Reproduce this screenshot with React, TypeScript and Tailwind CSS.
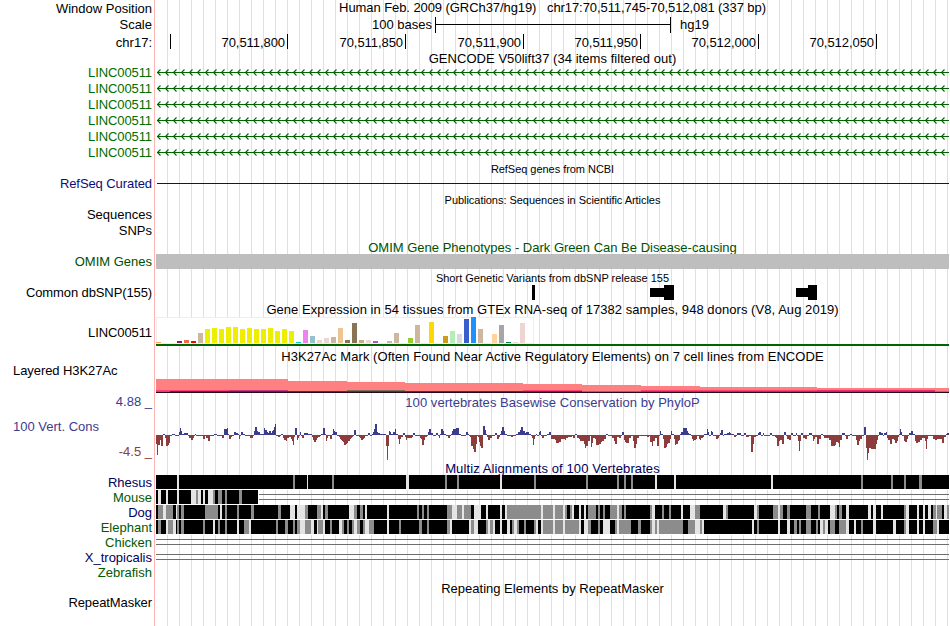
import type { ReactNode } from "react";
import clsx from "clsx";

const TRACK_WIDTH = 793;

const rulerTicks = [
  { label: "", width: 15 },
  { label: "70,511,800", width: 117 },
  { label: "70,511,850", width: 118 },
  { label: "70,511,900", width: 118 },
  { label: "70,511,950", width: 117 },
  { label: "70,512,000", width: 118 },
  { label: "70,512,050", width: 118 },
];

// [colour, height] for each GTEx tissue
const gtexBars: [string, number][] = [
  ["#ffa54f", 1], ["#ee9a00", 0], ["#8fbc8f", 0], ["#8b1c62", 2], ["#ee6a50", 3], ["#ff0000", 2],
  ["#cdb79e", 10], ["#eeee00", 14], ["#eeee00", 15], ["#eeee00", 14], ["#eeee00", 16], ["#eeee00", 16],
  ["#eeee00", 14], ["#eeee00", 15], ["#eeee00", 14], ["#eeee00", 14], ["#eeee00", 15], ["#eeee00", 12],
  ["#eeee00", 14], ["#eeee00", 12], ["#00cdcd", 1], ["#ee82ee", 13], ["#9ac0cd", 7], ["#eed5d2", 3],
  ["#eed5d2", 5], ["#cdb79e", 6], ["#eec591", 15], ["#8b7355", 3], ["#8b7355", 20], ["#cdaa7d", 3],
  ["#eed5d2", 3], ["#b452cd", 2], ["#7a378b", 0], ["#cdb79e", 2], ["#cdb79e", 10], ["#cdb79e", 0],
  ["#9acd32", 5], ["#cdb79e", 18], ["#7a67ee", 0], ["#ffd700", 21], ["#ffb6c1", 0], ["#cd9b1d", 7],
  ["#b4eeb4", 12], ["#d9d9d9", 9], ["#3a5fcd", 24], ["#1e90ff", 26], ["#cdb79e", 14], ["#cdb79e", 0],
  ["#ffd39b", 9], ["#a6a6a6", 18], ["#008b45", 1], ["#eed5d2", 1], ["#eed5d2", 20], ["#ff00ff", 0],
];

// [x, width, y, height, colour]
const h3k27Layers: [number, number, number, number, string][] = [
  [0, 132, 15, 14, "#ff8080"],
  [132, 59, 17, 12, "#ff8080"],
  [191, 58, 18, 11, "#ff8080"],
  [249, 118, 19, 10, "#ff8080"],
  [367, 59, 20, 9, "#ff8080"],
  [426, 59, 21, 8, "#ff8080"],
  [485, 59, 22, 7, "#ff8080"],
  [544, 117, 23, 6, "#ff8080"],
  [661, 132, 24, 5, "#ff8080"],
  [0, 73, 26, 1, "#ff4070"],
  [73, 59, 26, 1, "#c03880"],
  [191, 58, 26, 1, "#807060"],
  [367, 59, 26, 1, "#ff4070"],
  [485, 176, 26, 1, "#ff4070"],
  [661, 118, 26, 1, "#f02870"],
  [0, 14, 27, 1, "#ff3060"],
  [14, 353, 27, 1, "#702048"],
  [367, 59, 27, 1, "#802050"],
  [426, 59, 27, 1, "#e04068"],
  [485, 294, 27, 1, "#d02060"],
  [779, 14, 27, 1, "#e05070"],
  [0, 793, 28, 1, "#280820"],
];

// [x, score] steps; each score holds until the next x
const phyloP: [number, number][] = [
  [0, -9], [1, -20], [2, -10], [4, -5], [5, -11], [7, 1], [9, -3], [10, -11], [12, -10], [13, -8], [14, -1], [16, 1],
  [19, -1], [23, 3], [24, 7], [25, 4], [26, 1], [28, 2], [32, -1], [33, -3], [35, -5], [37, -3], [38, -1], [39, 1],
  [40, -1], [47, -4], [49, -1], [50, -3], [52, -6], [54, -1], [58, 1], [61, -1], [66, -3], [68, 6], [71, 7], [72, 1],
  [73, -4], [75, -2], [76, -1], [78, 3], [80, 2], [82, 1], [83, -4], [84, -1], [85, 3], [87, 1], [89, -1], [94, -3],
  [97, -1], [98, 4], [99, 8], [101, 4], [102, 3], [104, 1], [108, 7], [109, 5], [111, 3], [112, 2], [113, 4],
  [115, 2], [116, 4], [117, 5], [118, 8], [119, 11], [120, -1], [122, -2], [124, -1], [125, 1], [127, -3],
  [128, -5], [130, -6], [131, -3], [133, -2], [135, -4], [136, -6], [137, -10], [138, -2], [139, 7], [141, -5],
  [142, -3], [143, -1], [144, 3], [145, -1], [146, -3], [148, 2], [152, 1], [156, -2], [157, -5], [158, -7],
  [160, -5], [161, -3], [162, -2], [164, -1], [165, 1], [167, 7], [169, 1], [170, -6], [171, -3], [172, -1],
  [174, -4], [176, 1], [177, 6], [178, 4], [179, 3], [181, -1], [183, -2], [184, -4], [185, -5], [186, -6],
  [187, -7], [188, -10], [190, -9], [191, -8], [192, -6], [194, -4], [195, -3], [196, -2], [197, -1], [198, 5],
  [200, -1], [203, -2], [204, -3], [205, -5], [207, -4], [208, -3], [209, -1], [212, 2], [214, -1], [216, 1],
  [217, 3], [218, 6], [219, 11], [221, 3], [222, 2], [224, 1], [230, -11], [231, -25], [232, -11], [233, 4],
  [234, 3], [235, 1], [237, 3], [239, 6], [240, 1], [242, -4], [243, -9], [244, -4], [245, -2], [247, 2],
  [249, -2], [250, -5], [251, -3], [256, -2], [257, 2], [259, -1], [264, -3], [265, -4], [266, -10], [268, -5],
  [269, -2], [271, -1], [272, 3], [273, 6], [275, 2], [277, -1], [280, 2], [282, -1], [283, -3], [284, 1],
  [285, 6], [287, 4], [288, 1], [290, -1], [292, -3], [294, -1], [295, 1], [296, 4], [297, 6], [300, 7], [303, 1],
  [305, -1], [310, 3], [312, 1], [313, -1], [314, -2], [315, -11], [317, -14], [318, -17], [320, -9], [321, -1],
  [322, -2], [323, -7], [324, -11], [325, -13], [327, 9], [329, 5], [330, 1], [331, -2], [332, -5], [334, -3],
  [336, -1], [339, 2], [341, -4], [343, -2], [344, 1], [345, 4], [346, 8], [348, 4], [349, 1], [351, -1],
  [355, -2], [357, -1], [360, 1], [362, 3], [364, 5], [365, 8], [367, 4], [369, 2], [370, 3], [373, 1], [375, -1],
  [376, -3], [377, -10], [378, -4], [379, -1], [380, 1], [381, -1], [383, 3], [384, 4], [385, -1], [386, -3],
  [388, -1], [391, 1], [393, 3], [395, -4], [399, -5], [400, -8], [403, -7], [405, -4], [409, -5], [410, -3],
  [412, -2], [416, -1], [417, -3], [419, 1], [421, -3], [423, -4], [424, -6], [427, -6], [428, -9], [429, -13],
  [430, -11], [432, -6], [434, -1], [435, -12], [436, -8], [437, -3], [439, -4], [440, -10], [443, -9],
  [445, -7], [446, -6], [448, -4], [450, 1], [452, -1], [456, -3], [458, -6], [459, -9], [461, -2], [463, -3],
  [465, -1], [466, 3], [468, -5], [469, -7], [470, -8], [473, -3], [475, -1], [477, -6], [478, -13], [480, -9],
  [481, -3], [483, -1], [491, -2], [493, -1], [494, -7], [496, -11], [497, -6], [499, -3], [501, -11], [503, -1],
  [504, 4], [505, 1], [507, -4], [508, -13], [510, -12], [511, -9], [512, -8], [514, -4], [515, 4], [516, 1],
  [518, -4], [519, -10], [520, -9], [522, -6], [523, -5], [524, 1], [525, 3], [527, 7], [531, 4], [532, 2],
  [533, 1], [535, -1], [536, -4], [537, -6], [538, -5], [540, -4], [541, -1], [543, -4], [544, -5], [545, -3],
  [547, -2], [548, 1], [551, 6], [552, 3], [553, -1], [555, 4], [556, 3], [557, -1], [560, -4], [562, -3],
  [563, -1], [564, 2], [565, 5], [567, -1], [568, 1], [571, 2], [573, 3], [574, 2], [575, 1], [578, -2],
  [580, -1], [581, 2], [585, -1], [588, 2], [590, -2], [593, -1], [595, -17], [597, -9], [598, -2], [600, -1],
  [602, 2], [603, 3], [605, -1], [607, 2], [608, -1], [614, 2], [616, -1], [619, -2], [620, -3], [621, -11],
  [623, -6], [624, -5], [626, -9], [628, 3], [630, -1], [631, -4], [633, -5], [635, 2], [637, -1], [640, 2],
  [641, -1], [642, -6], [643, -16], [644, -6], [645, 2], [647, -3], [649, -4], [651, -1], [653, 2], [656, -1],
  [657, -6], [658, -4], [659, -2], [661, -9], [663, -4], [665, 1], [667, -1], [668, -3], [673, -5], [675, -11],
  [679, -10], [680, -7], [682, -8], [683, -12], [684, -5], [686, 2], [689, -1], [690, -4], [692, -1], [694, 1],
  [696, -1], [700, -5], [701, -10], [703, -6], [704, -4], [706, -1], [708, 8], [710, -13], [711, -25], [712, -18],
  [713, -13], [715, -14], [720, -9], [721, -5], [722, -1], [723, 3], [725, 2], [727, -1], [728, 2], [730, 3],
  [731, -3], [732, -5], [734, -9], [736, -4], [738, -5], [739, -8], [741, -6], [742, -2], [743, 1], [744, 6],
  [745, 3], [746, -1], [748, -6], [749, -7], [751, -4], [752, -1], [753, 2], [755, 4], [757, 1], [759, -6],
  [760, -8], [762, -7], [764, -5], [766, -3], [769, -6], [770, -14], [771, -4], [772, -1], [777, -4], [779, -5],
  [781, -4], [786, -8], [788, -2], [790, 1], [791, 2],
];

type Stripe = [number, number, "g" | "l"];

const rhesus: Stripe[] = [
  [21, 2, "l"], [137, 2, "g"], [151, 1, "l"], [176, 2, "g"], [250, 3, "l"], [289, 2, "g"], [301, 2, "g"],
  [344, 2, "l"], [378, 2, "g"], [430, 2, "g"], [461, 2, "g"], [468, 2, "g"], [475, 2, "g"], [499, 2, "l"],
  [518, 2, "l"], [615, 2, "l"], [705, 2, "g"], [735, 2, "g"], [748, 2, "g"], [763, 3, "g"],
];

const mouse: Stripe[] = [
  [2, 3, "l"], [10, 2, "l"], [21, 2, "l"], [35, 5, "l"], [40, 2, "g"], [42, 3, "l"], [47, 2, "l"], [52, 5, "l"],
  [57, 2, "g"], [62, 4, "g"], [69, 2, "g"], [83, 3, "g"],
];

const dog: Stripe[] = [
  [2, 5, "g"], [7, 3, "l"], [10, 7, "g"], [20, 1, "l"], [21, 2, "g"], [25, 3, "g"], [49, 13, "g"], [64, 2, "l"],
  [69, 2, "g"], [81, 2, "g"], [95, 3, "g"], [122, 3, "g"], [134, 5, "l"], [141, 8, "l"], [149, 3, "g"],
  [161, 4, "g"], [165, 2, "l"], [169, 3, "g"], [193, 5, "l"], [198, 3, "g"], [204, 3, "g"], [209, 2, "l"],
  [231, 2, "l"], [261, 2, "g"], [266, 2, "g"], [271, 2, "g"], [291, 5, "g"], [296, 5, "l"], [301, 5, "g"],
  [306, 2, "l"], [308, 7, "g"], [318, 7, "l"], [330, 2, "l"], [344, 2, "l"], [349, 2, "l"], [351, 34, "g"],
  [385, 2, "l"], [387, 10, "g"], [397, 2, "l"], [399, 8, "g"], [407, 2, "l"], [409, 2, "g"], [414, 2, "g"],
  [416, 2, "l"], [423, 2, "l"], [428, 2, "l"], [432, 8, "g"], [442, 2, "g"], [447, 2, "g"], [454, 7, "g"],
  [461, 2, "l"], [463, 3, "g"], [468, 2, "g"], [494, 2, "g"], [496, 3, "l"], [506, 2, "g"], [513, 2, "g"],
  [525, 2, "l"], [534, 5, "l"], [539, 5, "g"], [567, 3, "l"], [570, 2, "g"], [598, 3, "l"], [601, 2, "g"],
  [617, 5, "g"], [622, 2, "l"], [624, 3, "g"], [631, 3, "g"], [650, 5, "g"], [662, 2, "g"], [674, 5, "l"],
  [679, 2, "g"], [683, 3, "g"], [690, 3, "l"], [712, 3, "l"], [717, 3, "l"], [725, 2, "l"], [748, 2, "g"],
  [750, 3, "l"], [761, 2, "l"], [767, 2, "l"], [772, 3, "l"], [777, 3, "g"], [780, 1, "l"], [781, 5, "g"],
  [788, 3, "l"], [791, 2, "g"],
];

const elephant: Stripe[] = [
  [2, 3, "g"], [10, 2, "l"], [12, 5, "g"], [17, 3, "l"], [21, 2, "g"], [25, 3, "g"], [47, 2, "g"], [57, 2, "l"],
  [62, 2, "g"], [69, 2, "g"], [81, 2, "l"], [88, 5, "g"], [93, 2, "l"], [120, 2, "g"], [129, 3, "g"],
  [137, 2, "g"], [141, 3, "g"], [144, 5, "l"], [149, 6, "g"], [155, 3, "l"], [161, 1, "l"], [162, 5, "g"],
  [167, 2, "l"], [174, 2, "g"], [183, 3, "l"], [186, 2, "g"], [191, 2, "g"], [196, 2, "g"], [198, 3, "l"],
  [201, 3, "g"], [207, 2, "g"], [209, 4, "l"], [213, 5, "g"], [231, 2, "l"], [243, 2, "g"], [263, 3, "g"],
  [271, 2, "g"], [291, 3, "g"], [294, 2, "l"], [313, 2, "l"], [315, 3, "g"], [318, 4, "l"], [330, 2, "g"],
  [332, 2, "l"], [334, 3, "g"], [337, 2, "l"], [344, 2, "l"], [351, 3, "l"], [356, 2, "g"], [358, 3, "l"],
  [361, 2, "g"], [368, 2, "g"], [378, 2, "g"], [380, 2, "l"], [385, 2, "l"], [387, 10, "g"], [397, 2, "l"],
  [399, 8, "g"], [407, 2, "l"], [409, 14, "g"], [423, 2, "l"], [428, 4, "l"], [432, 3, "g"], [442, 2, "g"],
  [447, 7, "l"], [459, 2, "g"], [461, 2, "l"], [463, 12, "g"], [482, 3, "g"], [494, 2, "g"], [496, 3, "l"],
  [499, 2, "g"], [501, 2, "l"], [503, 24, "g"], [532, 7, "g"], [539, 5, "l"], [544, 2, "g"], [546, 2, "l"],
  [596, 2, "l"], [601, 2, "g"], [622, 2, "l"], [631, 3, "l"], [638, 3, "g"], [643, 2, "g"], [650, 5, "g"],
  [660, 2, "g"], [664, 3, "l"], [667, 2, "g"], [669, 3, "l"], [674, 5, "g"], [683, 7, "g"], [690, 3, "l"],
  [698, 2, "l"], [705, 2, "g"], [717, 3, "l"], [737, 3, "l"], [748, 2, "g"], [750, 3, "l"], [761, 2, "l"],
  [767, 2, "l"], [777, 4, "g"], [781, 2, "l"],
];

const species = [
  { name: "Rhesus", color: "text-[#00005a]", stripes: rhesus, end: TRACK_WIDTH, gap: false },
  { name: "Mouse", color: "text-[#005a00]", stripes: mouse, end: 102, gap: true },
  { name: "Dog", color: "text-[#00005a]", stripes: dog, end: TRACK_WIDTH, gap: false },
  { name: "Elephant", color: "text-[#005a00]", stripes: elephant, end: TRACK_WIDTH, gap: false },
  { name: "Chicken", color: "text-[#005a00]", stripes: [], end: 0, gap: true },
  { name: "X_tropicalis", color: "text-[#00005a]", stripes: [], end: 0, gap: true },
  { name: "Zebrafish", color: "text-[#005a00]", stripes: [], end: 0, gap: false },
];

interface RowProps {
  label?: ReactNode;
  labelClass?: string;
  className: string;
  children?: ReactNode;
}

function Row({ label, labelClass, className, children }: RowProps) {
  return (
    <div className={clsx("flex shrink-0", className)}>
      <div
        className={clsx(
          "mr-px w-[155px] shrink-0 border-r border-[#ffb4b4] pr-[2px] text-right",
          labelClass ?? "leading-[15px]"
        )}
      >
        {label}
      </div>
      <div className="w-[793px] shrink-0 bg-[repeating-linear-gradient(to_right,transparent_0px,transparent_11px,#dcdcff_11px,#dcdcff_12px)]">
        {children}
      </div>
    </div>
  );
}

function Title({ className, children }: { className: string; children: ReactNode }) {
  return <div className={clsx("text-center", className)}>{children}</div>;
}

function GeneArrows() {
  const chevrons = Array.from({ length: 99 }, (_, i) => `M${i * 8 + 4.5} 4.5l-3 3l3 3`).join("");
  return (
    <svg width={TRACK_WIDTH} height={16} className="block" fill="none" stroke="#006400">
      <path d={chevrons} strokeWidth={1.1} />
      <path d={`M0.5 7.5H${TRACK_WIDTH}`} shapeRendering="crispEdges" />
    </svg>
  );
}

function ConservationPlot() {
  return (
    <svg width={TRACK_WIDTH} height={50} className="block" shapeRendering="crispEdges">
      {phyloP.map(([x, score], i) => {
        const end = i + 1 < phyloP.length ? phyloP[i + 1][0] : TRACK_WIDTH;
        return (
          <rect
            key={x}
            x={x}
            y={score > 0 ? 25 - score : 25}
            width={end - x}
            height={Math.abs(score)}
            fill={score > 0 ? "#3c3c8c" : "#8c3c3c"}
          />
        );
      })}
      {/* clipped scores */}
      <rect x={231} y={48} width={1} height={2} fill="#ff00ff" />
      <rect x={711} y={48} width={1} height={2} fill="#ff00ff" />
    </svg>
  );
}

function Alignment({ stripes, end, gap }: { stripes: Stripe[]; end: number; gap: boolean }) {
  const gapStart = end > 0 ? end + 1 : 0;
  return (
    <svg width={TRACK_WIDTH} height={15} className="block" shapeRendering="crispEdges">
      <rect width={end} height={15} fill="#fff" />
      <rect width={end} height={14} fill="#000" />
      {stripes.map(([x, width, shade]) => (
        <rect key={x} x={x} width={width} height={14} fill={shade === "g" ? "#8c8c8c" : "#e4e4e4"} />
      ))}
      {gap && (
        <g fill="#6e6e6e">
          <rect x={gapStart} y={4} width={TRACK_WIDTH - gapStart} height={1} />
          <rect x={gapStart} y={9} width={TRACK_WIDTH - gapStart} height={1} />
        </g>
      )}
    </svg>
  );
}

export default function App() {
  return (
    <div className="flex h-[626px] w-[950px] flex-col overflow-hidden whitespace-pre bg-white font-['Liberation_Sans',Arial,sans-serif] text-[13px] text-black">
      {/* Position, scale and ruler */}
      <Row className="h-[17px]" label="Window Position" labelClass="leading-[17px]">
        <Title className="leading-[15px] tracking-[-0.075px]">
          {"Human Feb. 2009 (GRCh37/hg19)   chr17:70,511,745-70,512,081 (337 bp)"}
        </Title>
      </Row>
      <Row className="h-[17px]" label="Scale">
        <div className="flex leading-[15px]">
          <div className="w-[276px] text-right">100 bases</div>
          <div className="ml-[3px] flex h-[16px] w-[236px] items-center border-x border-black">
            <div className="mb-px h-px w-full bg-black" />
          </div>
          <div className="ml-[9px]">hg19</div>
        </div>
      </Row>
      <Row className="h-[17px]" label="chr17:" labelClass="leading-[17px]">
        <div className="flex">
          {rulerTicks.map((tick) => (
            <div
              key={tick.label}
              className="h-[15px] shrink-0 border-r border-black pr-[2px] text-right leading-[17px] tracking-[-0.06px]"
              style={{ width: tick.width }}
            >
              {tick.label}
            </div>
          ))}
        </div>
      </Row>

      {/* Genes */}
      <Row className="h-[14px]">
        <Title className="leading-[15px] tracking-[0.05px]">GENCODE V50lift37 (34 items filtered out)</Title>
      </Row>
      {[0, 1, 2, 3, 4, 5].map((i) => (
        <Row
          key={i}
          className="h-[16px]"
          label="LINC00511"
          labelClass="leading-[15px] tracking-[-0.1px] text-[#006e00]"
        >
          <GeneArrows />
        </Row>
      ))}
      <Row className="h-[16px]">
        <Title className="text-[11px] leading-[16px] tracking-[-0.04px]">RefSeq genes from NCBI</Title>
      </Row>
      <Row
        className="h-[15px]"
        label="RefSeq Curated"
        labelClass="leading-[13px] tracking-[-0.08px] text-[#0c0c78]"
      >
        <div className="ml-px pt-[6px]">
          <div className="h-px bg-[#0c0c78]" />
        </div>
      </Row>
      <Row className="h-[15px]">
        <Title className="text-[11px] leading-[16px] tracking-[-0.04px]">
          Publications: Sequences in Scientific Articles
        </Title>
      </Row>
      <Row className="h-[16px]" label="Sequences" />
      <Row className="h-[16px]" label="SNPs" />
      <Row className="h-[15px]">
        <Title className="leading-[17px] text-[#005000]">
          OMIM Gene Phenotypes - Dark Green Can Be Disease-causing
        </Title>
      </Row>
      <Row className="h-[15px]" label="OMIM Genes" labelClass="leading-[15px] text-[#005000]">
        <div className="h-full bg-[#bebebe]" />
      </Row>

      {/* Variants */}
      <Row className="h-[16px]">
        <Title className="text-[11px] leading-[18px]">Short Genetic Variants from dbSNP release 155</Title>
      </Row>
      <Row className="h-[15px]" label="Common dbSNP(155)" labelClass="leading-[15px] tracking-[-0.11px]">
        <div className="flex h-full items-center">
          <div className="ml-[376px] h-full w-[3px] bg-black" />
          <div className="ml-[115px] h-[9px] w-[14px] bg-black" />
          <div className="h-full w-[10px] bg-black" />
          <div className="ml-[122px] h-[9px] w-[12px] bg-black" />
          <div className="h-full w-[9px] bg-black" />
        </div>
      </Row>

      {/* Expression */}
      <Row className="h-[17px]">
        <Title className="leading-[19px] tracking-[0.055px]">
          Gene Expression in 54 tissues from GTEx RNA-seq of 17382 samples, 948 donors (V8, Aug 2019)
        </Title>
      </Row>
      <Row className="h-[29px]" label="LINC00511" labelClass="leading-[31px] tracking-[-0.1px]">
        <svg width={TRACK_WIDTH} height={29} className="block" shapeRendering="crispEdges">
          <rect x={0.5} y={0.5} width={377} height={26} fill="#fff" stroke="#eeeeee" />
          {gtexBars.map(([color, height], i) => (
            <rect key={i} x={i * 7} y={26 - height} width={5} height={height} fill={color} />
          ))}
          <rect y={27} width={TRACK_WIDTH} height={2} fill="#006400" />
        </svg>
      </Row>

      {/* Regulation */}
      <Row className="h-[18px]">
        <Title className="leading-[21px] tracking-[0.055px]">
          H3K27Ac Mark (Often Found Near Active Regulatory Elements) on 7 cell lines from ENCODE
        </Title>
      </Row>
      <Row
        className="h-[30px]"
        label={<div className="pl-[13px] text-left">Layered H3K27Ac</div>}
        labelClass="leading-[13px] tracking-[-0.07px]"
      >
        <svg width={TRACK_WIDTH} height={30} className="block" shapeRendering="crispEdges">
          {h3k27Layers.map(([x, width, y, height, color], i) => (
            <rect key={i} x={x} y={y} width={width} height={height} fill={color} />
          ))}
        </svg>
      </Row>

      {/* Conservation */}
      <Row className="h-[16px]" label="4.88 _" labelClass="leading-[15px] text-[#3c3c8c]">
        <Title className="leading-[17px] tracking-[0.05px] text-[#3c3c8c]">
          100 vertebrates Basewise Conservation by PhyloP
        </Title>
      </Row>
      <Row
        className="h-[50px]"
        label={
          <>
            <div className="h-[34px] pl-[13px] text-left leading-[33px] text-[#3c3c8c]">100 Vert. Cons</div>
            <div className="leading-[15px] text-[#8c3c3c]">-4.5 _</div>
          </>
        }
      >
        <ConservationPlot />
      </Row>
      <Row className="h-[15px]">
        <Title className="leading-[17px] tracking-[0.1px] text-[#00005a]">Multiz Alignments of 100 Vertebrates</Title>
      </Row>
      {species.map((s) => (
        <Row key={s.name} className="h-[15px]" label={s.name} labelClass={clsx("leading-[15px]", s.color)}>
          <Alignment stripes={s.stripes} end={s.end} gap={s.gap} />
        </Row>
      ))}

      {/* Repeats */}
      <Row className="h-[15px]">
        <Title className="leading-[17px]">Repeating Elements by RepeatMasker</Title>
      </Row>
      <Row className="h-[31px]" label="RepeatMasker" labelClass="leading-[15px] tracking-[-0.08px]" />
    </div>
  );
}
